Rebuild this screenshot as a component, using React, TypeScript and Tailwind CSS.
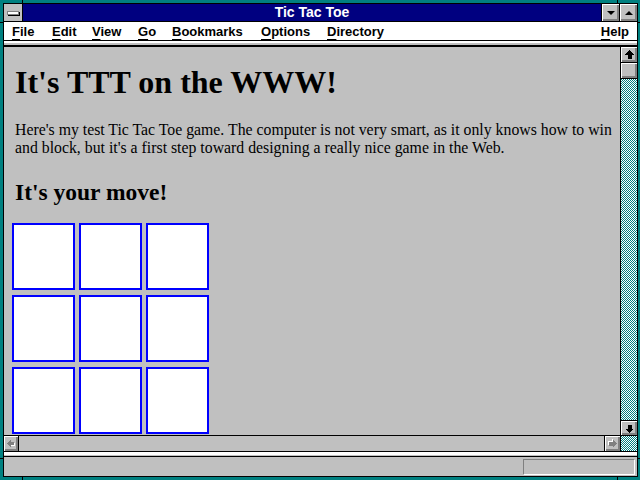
import React from 'react';

const bevel =
  'bg-[#c0c0c0] shadow-[inset_1px_1px_0_#ffffff,inset_-1px_-1px_0_#808080,inset_-2px_-2px_0_#808080]';

// 1px teal/white dither used for scrollbar tracks
const Dither: React.FC<{ id: string; className?: string }> = ({ id, className }) => (
  <div className={`bg-white overflow-hidden ${className ?? ''}`}>
    <svg width="100%" height="100%" shapeRendering="crispEdges">
      <defs>
        <pattern id={id} width="2" height="2" patternUnits="userSpaceOnUse">
          <rect x="0" y="0" width="1" height="1" fill="#008080" />
          <rect x="1" y="1" width="1" height="1" fill="#008080" />
        </pattern>
      </defs>
      <rect width="100%" height="100%" fill={`url(#${id})`} />
    </svg>
  </div>
);

const ArrowUp: React.FC<{ down?: boolean }> = ({ down }) => (
  <svg width="15" height="15" viewBox="0 0 15 15" shapeRendering="crispEdges" className={down ? 'rotate-180' : ''}>
    <polygon points="7.5,3 12,7.5 9.5,7.5 9.5,11.5 5.5,11.5 5.5,7.5 3,7.5" fill="#000" />
  </svg>
);

const ArrowSide: React.FC<{ right?: boolean }> = ({ right }) => (
  <svg width="15" height="15" viewBox="0 0 15 15" shapeRendering="crispEdges" className={right ? 'rotate-180' : ''}>
    <polygon points="4,8.5 8,4.5 8,6.5 12,6.5 12,10.5 8,10.5 8,12.5" fill="#ffffff" />
    <polygon points="3,7.5 7,3.5 7,5.5 11,5.5 11,9.5 7,9.5 7,11.5" fill="#808080" />
  </svg>
);

const Mnemonic: React.FC<{ text: string; className?: string }> = ({ text, className }) => (
  <span className={className}>
    <span className="underline decoration-1 underline-offset-[3px]">{text[0]}</span>
    {text.slice(1)}
  </span>
);

const App: React.FC = () => {
  const cells = Array.from({ length: 9 });

  return (
    <div className="relative w-[640px] h-[480px] bg-[#008080] pl-[3px] pr-[2px] pt-[3px] pb-[3px] overflow-hidden">
      {/* frame notches */}
      <div className="absolute left-[22px] top-0 w-px h-[3px] bg-black" />
      <div className="absolute left-[617px] top-0 w-px h-[3px] bg-black" />
      <div className="absolute left-[22px] bottom-0 w-px h-[3px] bg-black" />
      <div className="absolute left-[617px] bottom-0 w-px h-[3px] bg-black" />
      <div className="absolute left-0 top-[22px] w-[3px] h-px bg-black" />
      <div className="absolute right-0 top-[22px] w-[2px] h-px bg-black" />
      <div className="absolute left-0 top-[458px] w-[3px] h-px bg-black" />
      <div className="absolute right-0 top-[458px] w-[2px] h-px bg-black" />

      <div className="w-full h-full border border-black flex flex-col bg-[#c0c0c0] font-['Liberation_Sans',Arial,sans-serif]">
        {/* Title bar */}
        <div className="flex h-[18px] border-b border-black shrink-0">
          <div className="w-[19px] flex items-center justify-center bg-[#c0c0c0] border-r border-black">
            <div className="w-[12px] h-[4px] bg-white border border-[#808080] shadow-[1px_1px_0_#000]" />
          </div>
          <div className="flex-1 bg-[#000080] text-white font-bold text-[14px] leading-[17px] text-center">
            Tic Tac Toe
          </div>
          <div className={`w-[18px] border-l border-black flex items-center justify-center ${bevel}`}>
            <div className="w-0 h-0 border-l-[4px] border-r-[4px] border-t-[4px] border-l-transparent border-r-transparent border-t-black" />
          </div>
          <div className={`w-[18px] border-l border-black flex items-center justify-center ${bevel}`}>
            <div className="w-0 h-0 border-l-[4px] border-r-[4px] border-b-[4px] border-l-transparent border-r-transparent border-b-black" />
          </div>
        </div>

        {/* Menu bar */}
        <div className="flex h-[19px] bg-white border-b border-black text-[13px] leading-[19px] font-bold text-black pl-[8px] pr-[8px] shrink-0">
          <Mnemonic text="File" className="w-[40px]" />
          <Mnemonic text="Edit" className="w-[40px]" />
          <Mnemonic text="View" className="w-[46px]" />
          <Mnemonic text="Go" className="w-[34px]" />
          <Mnemonic text="Bookmarks" className="w-[89px]" />
          <Mnemonic text="Options" className="w-[66px]" />
          <Mnemonic text="Directory" />
          <Mnemonic text="Help" className="ml-auto" />
        </div>
        <div className="h-[2px] bg-white shrink-0" />
        <div className="h-[2px] bg-[#c0c0c0] shrink-0" />
        <div className="h-[2px] bg-black shrink-0" />

        {/* Main area */}
        <div className="flex h-[388px] shrink-0">
          <div className="flex-1 overflow-hidden bg-[#c0c0c0] text-black font-['Liberation_Serif','Times_New_Roman',serif] pl-[8px]">
            <h1 className="mt-[17px] pl-[3px] text-[32px] leading-[36px] font-bold whitespace-nowrap">
              It's TTT on the WWW!
            </h1>
            <p className="mt-[21px] pl-[3px] text-[15.8px] leading-[18px] whitespace-nowrap">
              Here's my test Tic Tac Toe game. The computer is not very smart, as it only knows how to win
              <br />
              and block, but it's a first step toward designing a really nice game in the Web.
            </p>
            <h2 className="mt-[21px] pl-[3px] text-[23.5px] leading-[28px] font-bold">It's your move!</h2>
            <div className="mt-[17px] grid grid-cols-[63px_63px_63px] auto-rows-[67px] gap-x-[4px] gap-y-[5px]">
              {cells.map((_, i) => (
                <div key={i} className="border-2 border-[#0000ff] bg-white" />
              ))}
            </div>
          </div>

          {/* Vertical scrollbar */}
          <div className="w-[17px] border-l border-black flex flex-col">
            <div className={`h-[16px] border-b border-black flex items-center justify-center ${bevel}`}>
              <ArrowUp />
            </div>
            <div className={`h-[16px] border-b border-black ${bevel}`} />
            <Dither id="vtrack" className="flex-1" />
            <div className={`h-[15px] border-t border-black flex items-center justify-center ${bevel}`}>
              <ArrowUp down />
            </div>
          </div>
        </div>

        {/* Horizontal scrollbar */}
        <div className="flex h-[17px] border-t border-b border-black shrink-0">
          <div className={`w-[15px] border-r border-black flex items-center justify-center ${bevel}`}>
            <ArrowSide />
          </div>
          <div className="flex-1 bg-[#c0c0c0]" />
          <div className={`w-[16px] border-l border-black flex items-center justify-center ${bevel}`}>
            <ArrowSide right />
          </div>
          <div className="w-[17px] border-l border-black flex">
            <Dither id="corner" className="flex-1" />
          </div>
        </div>
        <div className="h-[3px] bg-white shrink-0" />
        <div className="h-px bg-[#c0c0c0] shrink-0" />
        <div className="h-px bg-black shrink-0" />

        {/* Status bar */}
        <div className="flex-1 flex justify-end items-start bg-[#c0c0c0] pt-[2px] pr-[2px]">
          <div className="w-[112px] h-[16px] border-t border-l border-[#808080] border-b border-r border-b-white border-r-white" />
        </div>
      </div>
    </div>
  );
};

export default App;
